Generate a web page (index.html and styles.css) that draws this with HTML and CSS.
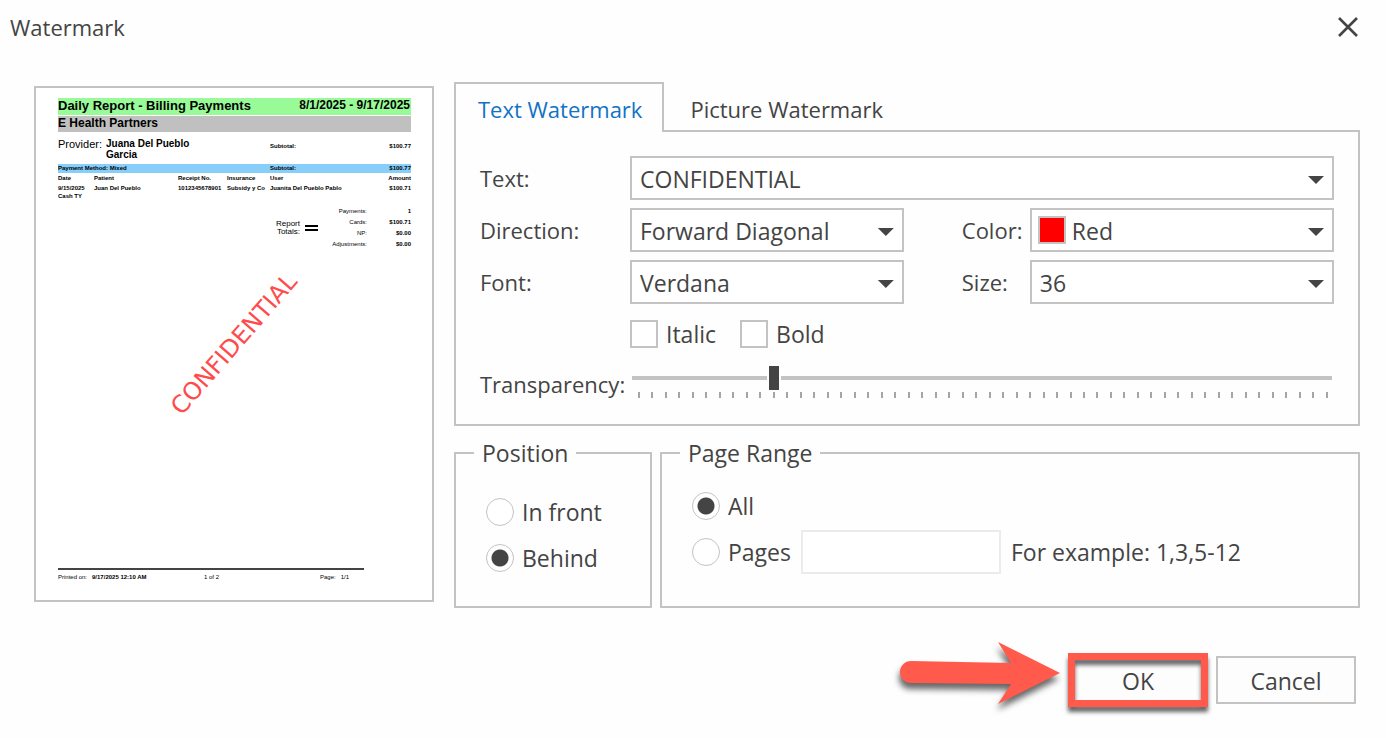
FILE: index.html
```html
<!DOCTYPE html>
<html lang="en">
<head>
<meta charset="utf-8">
<title>Watermark</title>
<link rel="stylesheet" href="styles.css">
</head>
<body>
<form class="dialog">
  <header class="titlebar">
    <h1 class="title">Watermark</h1>
    <button class="close" type="button" aria-label="Close">
      <svg width="20" height="20" viewBox="0 0 20 20"><path d="M1 1L19 19M19 1L1 19" fill="none" stroke="#444" stroke-width="2.6"/></svg>
    </button>
  </header>

  <main class="content">
    <section class="preview" aria-label="Preview">
      <div class="report-head"><strong>Daily Report - Billing Payments</strong><span class="report-dates">8/1/2025 - 9/17/2025</span></div>
      <div class="report-org">E Health Partners</div>
      <div class="provider">
        <span class="provider-label">Provider:</span>
        <span class="provider-name">Juana Del Pueblo Garcia</span>
        <b>Subtotal:</b>
        <b class="amount">$100.77</b>
      </div>
      <table class="lines">
        <colgroup><col class="c-date"><col class="c-patient"><col class="c-receipt"><col class="c-ins"><col class="c-user"><col></colgroup>
        <tr class="group"><td colspan="4">Payment Method: Mixed</td><td>Subtotal:</td><td class="amount">$100.77</td></tr>
        <tr class="cols"><th>Date</th><th>Patient</th><th>Receipt No.</th><th>Insurance</th><th>User</th><th class="amount">Amount</th></tr>
        <tr><td>9/15/2025</td><td>Juan Del Pueblo</td><td>1012345678901</td><td>Subsidy y Co</td><td>Juanita Del Pueblo Pablo</td><td class="amount">$100.71</td></tr>
        <tr class="note"><td colspan="6">Cash TY</td></tr>
      </table>
      <div class="totals">
        <span class="totals-label">Report<br>Totals:</span>
        <span class="equals"></span>
        <table class="sums">
          <tr><td>Payments:</td><td>1</td></tr>
          <tr><td>Cards:</td><td>$100.71</td></tr>
          <tr><td>NP:</td><td>$0.00</td></tr>
          <tr><td>Adjustments:</td><td>$0.00</td></tr>
        </table>
      </div>
      <div class="stamp">CONFIDENTIAL</div>
      <div class="report-foot"><span>Printed on: &nbsp; <b>9/17/2025 12:10 AM</b></span><span>1 of 2</span><span>Page: &nbsp; 1/1</span></div>
    </section>

    <div class="settings">
      <nav class="tabs" role="tablist">
        <button class="tab tab-active" type="button" role="tab" aria-selected="true">Text Watermark</button>
        <button class="tab" type="button" role="tab" aria-selected="false">Picture Watermark</button>
      </nav>
      <section class="panel">
        <label for="text">Text:</label>
        <div class="select wide">
          <select id="text"><option>CONFIDENTIAL</option></select>
        </div>

        <label for="direction">Direction:</label>
        <div class="select"><select id="direction"><option>Forward Diagonal</option></select></div>
        <label class="second" for="color">Color:</label>
        <div class="select has-swatch"><span class="swatch"></span><select id="color"><option>Red</option></select></div>

        <label for="font">Font:</label>
        <div class="select"><select id="font"><option>Verdana</option></select></div>
        <label class="second" for="size">Size:</label>
        <div class="select"><select id="size"><option>36</option></select></div>

        <div class="checks">
          <label class="choice"><input type="checkbox">Italic</label>
          <label class="choice"><input type="checkbox">Bold</label>
        </div>

        <label for="transparency">Transparency:</label>
        <div class="slider">
          <input id="transparency" type="range" min="0" max="51" value="10">
          <div class="ticks" aria-hidden="true"><i></i><i></i><i></i><i></i><i></i><i></i><i></i><i></i><i></i><i></i><i></i><i></i><i></i><i></i><i></i><i></i><i></i><i></i><i></i><i></i><i></i><i></i><i></i><i></i><i></i><i></i><i></i><i></i><i></i><i></i><i></i><i></i><i></i><i></i><i></i><i></i><i></i><i></i><i></i><i></i><i></i><i></i><i></i><i></i><i></i><i></i><i></i><i></i><i></i><i></i><i></i><i></i></div>
        </div>
      </section>

      <div class="groups">
        <fieldset class="group-box position">
          <legend>Position</legend>
          <label class="choice"><input type="radio" name="position">In front</label>
          <label class="choice"><input type="radio" name="position" checked>Behind</label>
        </fieldset>
        <fieldset class="group-box range">
          <legend>Page Range</legend>
          <label class="choice"><input type="radio" name="range" checked>All</label>
          <div class="pages">
            <label class="choice"><input type="radio" name="range">Pages</label>
            <input class="pages-input" type="text" aria-label="Page numbers" disabled>
            <span>For example: 1,3,5-12</span>
          </div>
        </fieldset>
      </div>
    </div>
  </main>

  <footer class="actions">
    <div class="callout">
      <svg class="arrow" width="180" height="84" viewBox="890 634 180 84" aria-hidden="true"><path d="M911 661L1011 663L998 642L1060 673L998 704L1011 684L911 683A11 11 0 0 1 911 661Z" fill="#ff5a4b"/></svg>
      <button class="button" type="submit">OK</button>
      <span class="ring"></span>
    </div>
    <button class="button" type="button">Cancel</button>
  </footer>
</form>
</body>
</html>
```
FILE: styles.css
```css
* { box-sizing: border-box; }

body {
  margin: 0;
  background: #fefefe;
  color: #444;
  font: 23px/32px "Open Sans", "Noto Sans", sans-serif;
}

button, input, select { font: inherit; color: inherit; margin: 0; }

.dialog { padding: 0 26px 34px 34px; }

.titlebar {
  display: flex;
  justify-content: space-between;
  align-items: center;
  height: 54px;
  margin: 0 0 28px -24px;
}
.title { margin: 0; font-size: 22px; font-weight: 400; }
.close { display: flex; padding: 0 2px; border: 0; background: none; }

.content { display: flex; gap: 20px; }

/* Report preview */
.preview {
  position: relative;
  display: flex;
  flex-direction: column;
  flex: 0 0 400px;
  margin: 4px 0 6px;
  padding: 10px 21px 18px 22px;
  border: 2px solid #c3c3c3;
  background: #fff;
  color: #000;
  font: 6px/9px "Liberation Sans", Arial, sans-serif;
}
.report-head {
  display: flex;
  justify-content: space-between;
  height: 17px;
  background: #98fb98;
  font-size: 13px;
  line-height: 15px;
}
.report-dates { padding-right: 1px; font-size: 12px; line-height: 14px; font-weight: 700; }
.report-org {
  height: 16px;
  margin-top: 1px;
  background: #c0c0c0;
  font-size: 12px;
  font-weight: 700;
  line-height: 14px;
}
.provider {
  display: grid;
  grid-template-columns: 48px 100px 1fr auto;
  height: 32px;
  padding-top: 6px;
  line-height: 16px;
}
.provider b:first-of-type { padding-left: 64px; }
.provider-label { font-size: 11px; line-height: 13px; }
.provider-name { font-size: 10px; line-height: 11px; font-weight: 700; }
.lines { width: 100%; border-collapse: collapse; table-layout: fixed; font-weight: 700; }
.lines td, .lines th { padding: 0; text-align: left; white-space: nowrap; }
.lines .amount, .amount { text-align: right; }
.lines .c-date { width: 36px; }
.lines .c-patient { width: 84px; }
.lines .c-receipt { width: 49px; }
.lines .c-ins { width: 43px; }
.lines .c-user { width: 100px; }
.group { background: #87cefa; }
.cols { line-height: 11px; }
.note { line-height: 7px; }
.totals {
  display: flex;
  justify-content: flex-end;
  align-items: center;
  gap: 5px;
  margin-top: 6px;
}
.totals-label { font-size: 8px; line-height: 8px; text-align: right; }
.equals { width: 13px; height: 6px; border: solid #000; border-width: 2px 0; }
.sums { width: 88px; border-collapse: collapse; line-height: 11px; font-weight: 700; }
.sums td { padding: 0; text-align: right; }
.sums td:first-child { width: 44px; font-weight: 400; }
.stamp {
  position: absolute;
  left: 50%;
  top: 50%;
  color: #ff4b4b;
  font: 24px/24px "DejaVu Sans", Verdana, sans-serif;
  transform: translate(-50%, -50%) rotate(-49deg);
}
.report-foot {
  display: grid;
  grid-template-columns: 146px 116px auto;
  width: 306px;
  margin-top: auto;
  padding-top: 3px;
  border-top: 2px solid #444;
}

/* Tabs and text options */
.settings { flex: 1; min-width: 0; }
.tabs { display: flex; height: 50px; margin-bottom: -2px; position: relative; font-size: 22px; }
.tab { padding: 4px 26px 0; border: 0; background: none; }
.tab-active {
  padding: 2px 20px 0 22px;
  border: 2px solid #c3c3c3;
  border-bottom: 0;
  background: #fefefe;
  color: #1272c4;
}
.panel {
  display: grid;
  grid-template-columns: 150px minmax(0, 9fr) 126px minmax(0, 10fr);
  gap: 8px 0;
  align-items: center;
  padding: 24px 24px 20px;
  border: 2px solid #c3c3c3;
}
.panel > label { font-size: 22px; white-space: nowrap; }
.panel > .second { padding-left: 58px; }
.wide { grid-column: 2 / -1; }
.select { position: relative; }
.select select {
  display: block;
  width: 100%;
  height: 44px;
  padding: 2px 40px 0 8px;
  border: 2px solid #c3c3c3;
  border-radius: 0;
  background: #fff;
  appearance: none;
}
.select::after {
  content: "";
  position: absolute;
  right: 10px;
  top: 20px;
  width: 16px;
  height: 8px;
  background: #444;
  clip-path: polygon(0 0, 100% 0, 50% 100%);
  pointer-events: none;
}
.has-swatch select { padding-left: 40px; }
.swatch {
  position: absolute;
  left: 8px;
  top: 8px;
  width: 28px;
  height: 28px;
  border: 2px solid #c3c3c3;
  background: #f00;
}

.checks { grid-column: 2 / -1; display: flex; gap: 24px; height: 44px; }
.choice { display: flex; align-items: center; gap: 8px; }
.choice input {
  flex: none;
  width: 28px;
  height: 28px;
  border: 2px solid #c3c3c3;
  background: #fff;
  appearance: none;
}
.choice input[type="radio"] { border-width: 1px; border-radius: 50%; }
.choice input[type="radio"]:checked { background: radial-gradient(circle, #444 8px, #fff 9px); }
.checks input:checked { background: #444; }

.slider { grid-column: 2 / -1; height: 40px; padding: 2px 2px 0; }
.slider input { display: block; width: 100%; height: 24px; background: none; appearance: none; }
.slider input::-webkit-slider-runnable-track {
  height: 24px;
  background: linear-gradient(#c3c3c3, #c3c3c3) center / 100% 4px no-repeat;
}
.slider input::-webkit-slider-thumb {
  width: 14px;
  height: 24px;
  border: solid #fefefe;
  border-width: 0 2px;
  background: #444;
  appearance: none;
}
.ticks { display: flex; justify-content: space-between; margin: 2px 4px 0 6px; }
.ticks i { width: 2px; height: 6px; background: #a5a5a5; }

/* Position and page range */
.groups { display: flex; gap: 8px; margin-top: 12px; }
.group-box { margin: 0; border: 2px solid #c3c3c3; min-width: 0; }
.group-box legend { margin-left: -12px; padding: 0 8px; line-height: 30px; }
.group-box .choice { height: 46px; }
.position { flex: 0 0 198px; padding: 21px 0 25px 30px; }
.range { flex: 1; padding: 15px 24px 31px 30px; }
.pages { display: flex; align-items: center; gap: 10px; }
.pages-input { width: 200px; height: 44px; padding: 0 8px; border: 2px solid #ebebeb; background: #fff; }

/* Buttons */
.actions { display: flex; justify-content: flex-end; gap: 8px; margin: 48px 4px 0 0; }
.button {
  display: block;
  width: 140px;
  height: 48px;
  padding: 2px 0 0;
  border: 2px solid #c3c3c3;
  background: #fdfdfd;
}
.callout { position: relative; }
.ring {
  position: absolute;
  inset: -3px 0;
  border: 7px solid #ff5a4b;
  filter: drop-shadow(0 5px 2px rgba(0, 0, 0, .6));
  pointer-events: none;
}
.arrow {
  position: absolute;
  right: 138px;
  top: -22px;
  filter: drop-shadow(-1px 6px 3px rgba(0, 0, 0, .6));
}
```
